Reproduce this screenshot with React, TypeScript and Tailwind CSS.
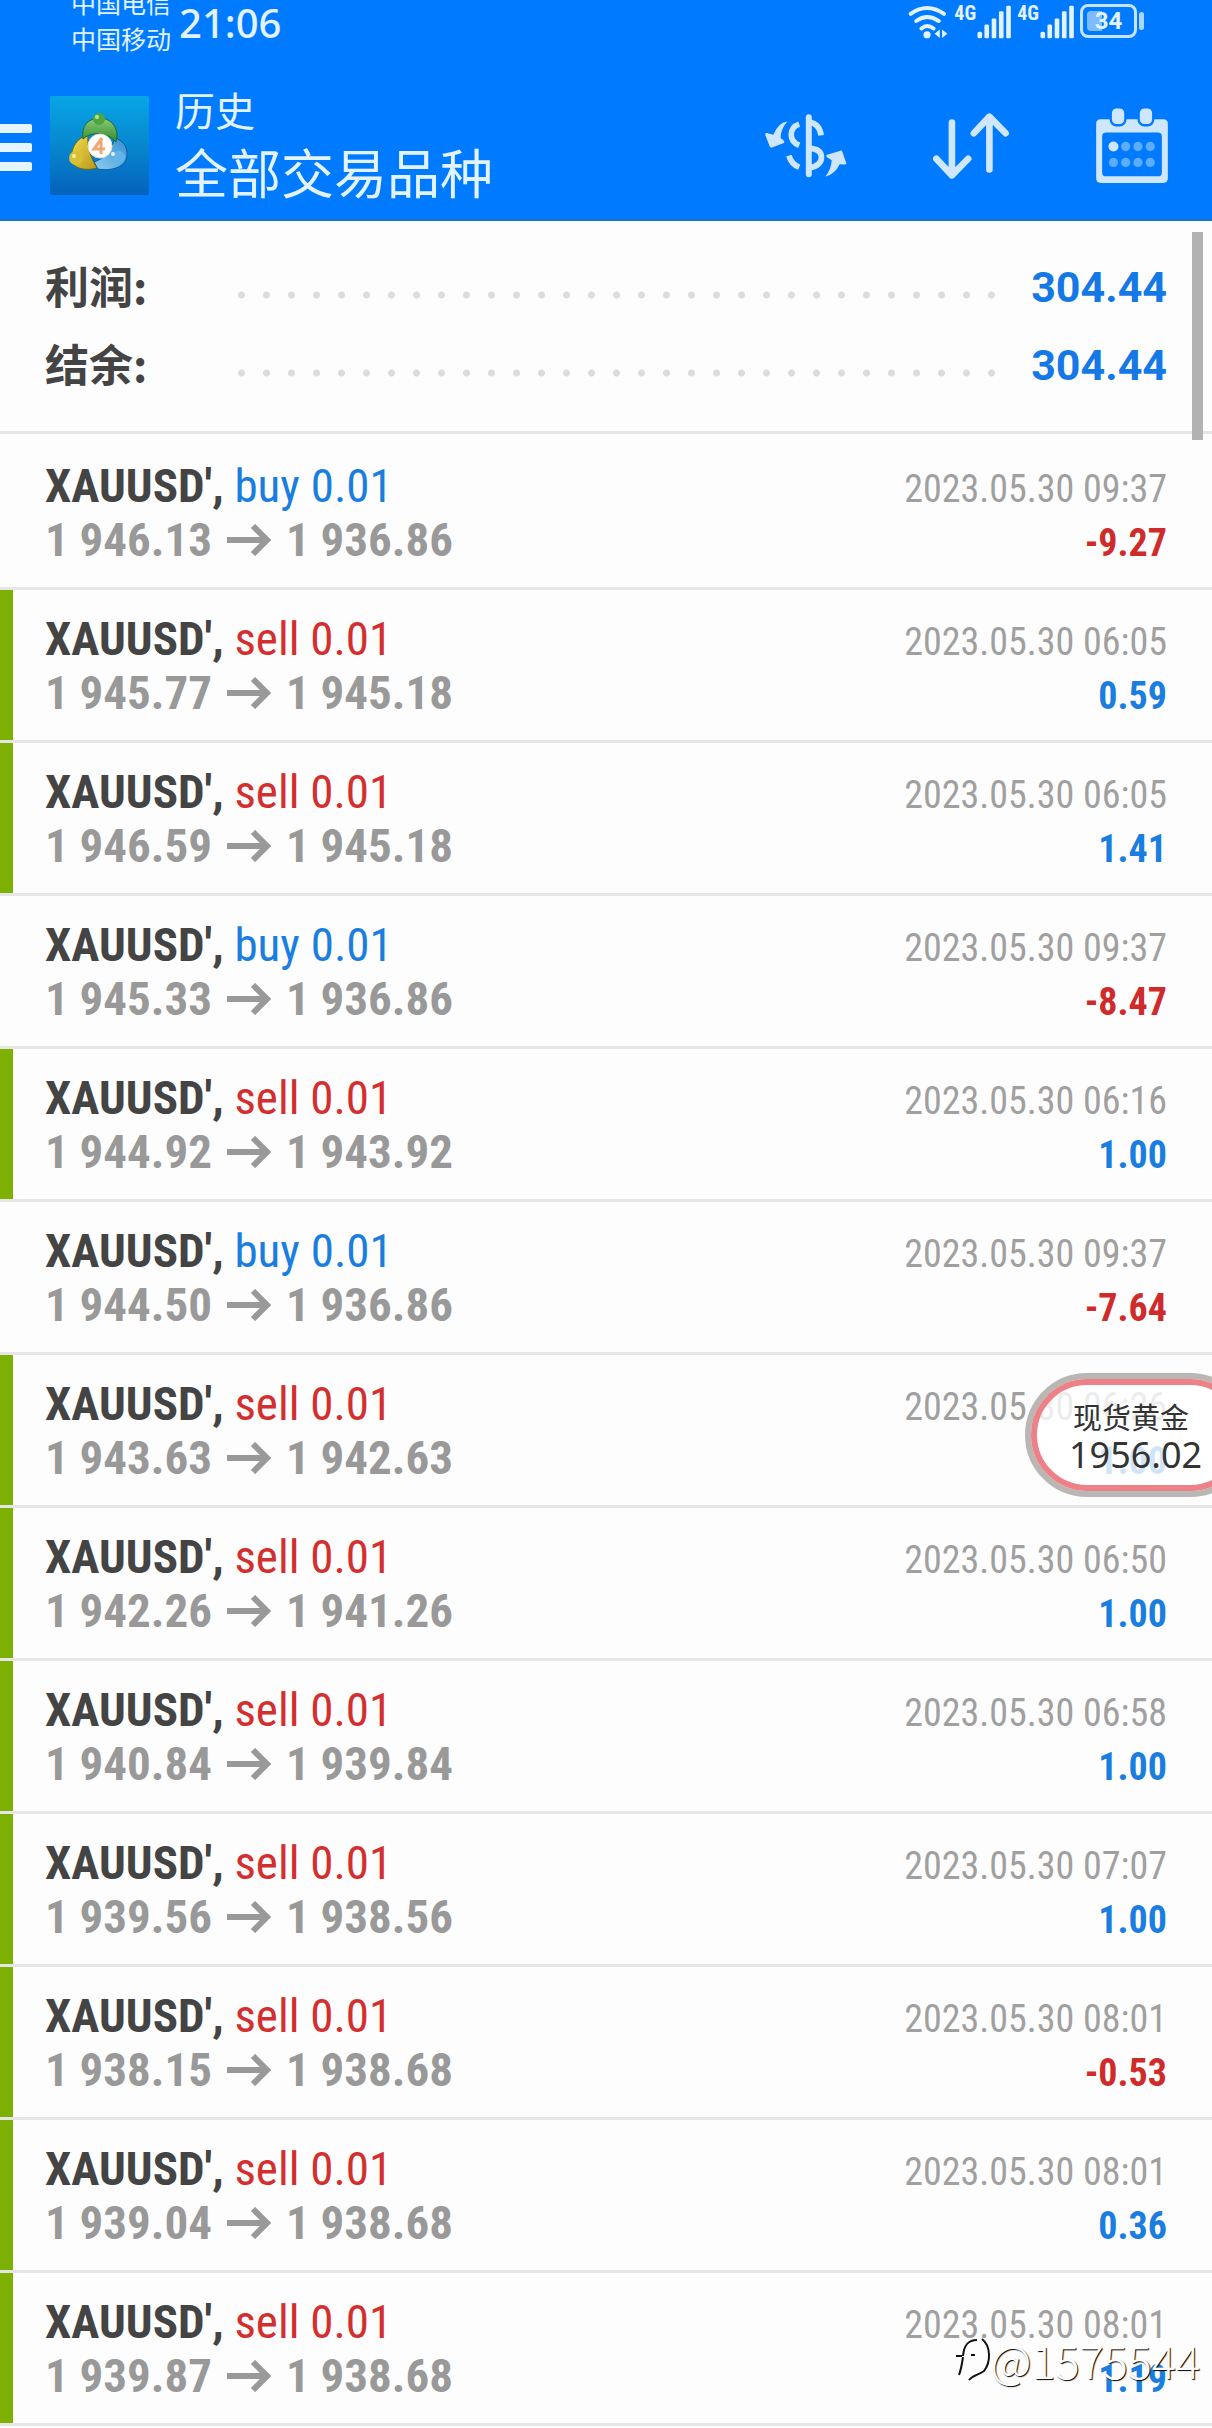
import React from 'react'

type Deal = {
    side: 'buy' | 'sell';
    open: string;
    close: string;
    time: string;
    profit: string;
    marked?: boolean;
}

const deals: Deal[] = [
    { side: 'buy', open: '1 946.13', close: '1 936.86', time: '09:37', profit: '-9.27' },
    { side: 'sell', open: '1 945.77', close: '1 945.18', time: '06:05', profit: '0.59', marked: true },
    { side: 'sell', open: '1 946.59', close: '1 945.18', time: '06:05', profit: '1.41', marked: true },
    { side: 'buy', open: '1 945.33', close: '1 936.86', time: '09:37', profit: '-8.47' },
    { side: 'sell', open: '1 944.92', close: '1 943.92', time: '06:16', profit: '1.00', marked: true },
    { side: 'buy', open: '1 944.50', close: '1 936.86', time: '09:37', profit: '-7.64' },
    { side: 'sell', open: '1 943.63', close: '1 942.63', time: '06:26', profit: '1.00', marked: true },
    { side: 'sell', open: '1 942.26', close: '1 941.26', time: '06:50', profit: '1.00', marked: true },
    { side: 'sell', open: '1 940.84', close: '1 939.84', time: '06:58', profit: '1.00', marked: true },
    { side: 'sell', open: '1 939.56', close: '1 938.56', time: '07:07', profit: '1.00', marked: true },
    { side: 'sell', open: '1 938.15', close: '1 938.68', time: '08:01', profit: '-0.53', marked: true },
    { side: 'sell', open: '1 939.04', close: '1 938.68', time: '08:01', profit: '0.36', marked: true },
    { side: 'sell', open: '1 939.87', close: '1 938.68', time: '08:01', profit: '1.19', marked: true },
]

function WifiIcon() {
    return (
        <svg className="w-[41px] h-9" viewBox="20 8 125 110" fill="none" stroke="currentColor" strokeWidth="12" strokeLinecap="round">
            <path d="M28 38Q78 2 130 38M45 60Q78 36 114 60M61 83Q78 68 98 83" />
            <circle cx="78" cy="102" r="11" fill="currentColor" stroke="none" />
            <path d="M101 99L117 86V112ZM140 99L124 86V112Z" fill="currentColor" stroke="none" />
        </svg>
    )
}

function Signal() {
    return (
        <div className="flex items-start">
            <span className="font-['Roboto_Condensed','Roboto',sans-serif] font-bold text-[20px] leading-[18px]">4G</span>
            <svg className="w-9 h-[35px]" viewBox="214 10 108 106" fill="currentColor">
                <rect x="218" y="94" width="14" height="20" rx="5" />
                <rect x="239" y="72" width="14" height="42" rx="4" />
                <rect x="261" y="54" width="14" height="60" rx="4" />
                <rect x="283" y="32" width="14" height="82" rx="4" />
                <rect x="305" y="15" width="14" height="99" rx="4" />
            </svg>
        </div>
    )
}

function Battery() {
    return (
        <div className="flex items-center gap-[2px] h-[34px]">
            <div className="w-[57px] h-[34px] rounded-lg border-3 border-[#c4e4ff] p-1 flex">
                <span className="w-full rounded-sm bg-linear-to-r from-[#7cbcff] from-34% to-transparent to-34% text-center font-['Roboto',sans-serif] font-bold text-[24px] leading-[20px]">
                    34
                </span>
            </div>
            <div className="w-[5px] h-[18px] rounded-sm bg-[#a9d6ff]" />
        </div>
    )
}

function AppLogo() {
    return (
        <svg className="w-[99px] h-[99px] shrink-0" viewBox="0 0 99 99">
            <defs>
                <linearGradient id="tile" x1="0" y1="0" x2="0" y2="1">
                    <stop offset="0" stopColor="#07a6e6" />
                    <stop offset="0.5" stopColor="#0787cf" />
                    <stop offset="1" stopColor="#0562bc" />
                </linearGradient>
                <linearGradient id="green" x1="0" y1="0" x2="0" y2="1">
                    <stop offset="0" stopColor="#8ccb7a" />
                    <stop offset="1" stopColor="#2f8a2c" />
                </linearGradient>
                <linearGradient id="gold" x1="0" y1="0" x2="1" y2="1">
                    <stop offset="0" stopColor="#f2e04e" />
                    <stop offset="1" stopColor="#b9951a" />
                </linearGradient>
                <linearGradient id="sky" x1="1" y1="0" x2="0" y2="1">
                    <stop offset="0" stopColor="#2f8fd0" />
                    <stop offset="1" stopColor="#8fcdf2" />
                </linearGradient>
            </defs>
            <rect width="99" height="99" rx="2" fill="url(#tile)" />
            <path d="M48 73C58 75 75 73 77 60C78 50 72 44 65 42C60 56 55 62 44 66Z" fill="url(#sky)" stroke="#0b5c9c" />
            <path d="M38 39C27 42 22 50 21 62C20 71 34 76 47 72C41 62 37 52 38 39Z" fill="url(#gold)" stroke="#5f6a1d" />
            <path d="M33 43C31 30 38 22 50 22C62 22 70 34 66 46C60 39 45 33 33 43Z" fill="url(#green)" stroke="#1c6a3a" />
            <circle cx="49" cy="23" r="6" fill="#4fa63e" />
            <circle cx="47" cy="21" r="2" fill="#b6e3a4" />
            <circle cx="26" cy="62" r="7" fill="#d9bf35" />
            <circle cx="24" cy="60" r="2" fill="#fbf3a0" />
            <circle cx="69" cy="61" r="6" fill="#62b4ea" />
            <circle cx="63" cy="58" r="2" fill="#e3f4ff" />
            <circle cx="50" cy="50" r="12" fill="#fff" stroke="#e6dcc8" />
            <path d="M52 42L44 53H55M51 44V58" fill="none" stroke="#f0a873" strokeWidth="3" />
        </svg>
    )
}

function CurrencyIcon() {
    return (
        <svg className="w-[83px] h-[65px]" viewBox="30 35 250 195" fill="none" stroke="currentColor" strokeWidth="17" strokeLinecap="butt">
            <path d="M100 60Q72 64 58 100L38 95Q32 94 34 101L47 135Q50 142 56 138L88 126Q94 123 90 118L80 110Q80 84 100 60Z" fill="currentColor" stroke="none" />
            <path d="M215 226Q243 220 258 189L273 190Q280 189 277 183L266 151Q263 146 258 149L220 160Q215 163 219 167L234 177Q232 205 215 226Z" fill="currentColor" stroke="none" />
            <path d="M136 68Q112 76 112 100Q112 122 136 132M105 163Q112 188 136 198M166 62Q198 68 202 102M166 141Q203 142 203 168Q203 194 166 200" />
            <path d="M165 47V219" strokeWidth="18" strokeLinecap="round" />
        </svg>
    )
}

function SortIcon() {
    return (
        <svg className="w-[78px] h-[68px]" viewBox="630 335 235 205" fill="none" stroke="currentColor" strokeWidth="20" strokeLinecap="round" strokeLinejoin="round">
            <path d="M690 367V524M643 476L690 526L739 476" />
            <path d="M803 508V350M756 399L803 349L852 399" />
        </svg>
    )
}

function CalendarIcon() {
    return (
        <svg className="w-[74px] h-[77px]" viewBox="1124 318 222 232" fill="currentColor">
            <path fillRule="evenodd" d="M1141 355H1329Q1343 355 1343 369V533Q1343 547 1329 547H1141Q1127 547 1127 533V369Q1127 355 1141 355ZM1157 395Q1145 395 1145 407V515Q1145 527 1157 527H1313Q1325 527 1325 515V407Q1325 395 1313 395Z" />
            <rect x="1171" y="319" width="44" height="54" rx="17" stroke="#007bff" strokeWidth="7" />
            <rect x="1255" y="319" width="44" height="54" rx="17" stroke="#007bff" strokeWidth="7" />
            <circle cx="1179" cy="437" r="15" />
            <g fill="#5cadff">
                <circle cx="1216" cy="437" r="14" />
                <circle cx="1253" cy="437" r="14" />
                <circle cx="1290" cy="437" r="14" />
                <circle cx="1179" cy="485" r="14" />
                <circle cx="1216" cy="485" r="14" />
                <circle cx="1253" cy="485" r="14" />
                <circle cx="1290" cy="485" r="14" />
            </g>
        </svg>
    )
}

function Header() {
    return (
        <header className="bg-[#007bff] border-b-2 border-[#1a6fcf] text-[#e2f3ff] font-['Noto_Sans_CJK_SC',sans-serif]">
            <div className="flex justify-between h-14 overflow-hidden pl-[71px] pr-[68px]">
                <div className="flex gap-2">
                    <div className="-mt-4 text-[25px] leading-9">
                        <p>中国电信</p>
                        <p>中国移动</p>
                    </div>
                    <p className="font-['Noto_Sans',sans-serif] font-medium text-[40px] leading-[46px]">21:06</p>
                </div>
                <div className="flex items-start gap-[5px] pt-1">
                    <WifiIcon />
                    <Signal />
                    <Signal />
                    <Battery />
                </div>
            </div>
            <div className="flex items-center h-[163px] pt-4 pr-[43px]">
                <button aria-label="菜单" className="flex flex-col gap-2.5 w-8 pt-1">
                    <span className="h-[9px] rounded-r-xs bg-[#e6f5ff]" />
                    <span className="h-[9px] rounded-r-xs bg-[#e6f5ff]" />
                    <span className="h-[9px] rounded-r-xs bg-[#e6f5ff]" />
                </button>
                <div className="ml-[18px]">
                    <AppLogo />
                </div>
                <div className="ml-[26px] pb-3">
                    <p className="text-[40px] leading-[62px]">历史</p>
                    <h1 className="text-[53px] leading-[62px]">全部交易品种</h1>
                </div>
                <div className="ml-auto flex items-center gap-[85px] text-[#cfe6ff]">
                    <button aria-label="货币"><CurrencyIcon /></button>
                    <button aria-label="排序"><SortIcon /></button>
                    <button aria-label="日期"><CalendarIcon /></button>
                </div>
            </div>
        </header>
    )
}

function SummaryRow({ label, value }: { label: string; value: string }) {
    return (
        <div className="flex items-center h-[78px]">
            <dt className="w-[184px] pb-1 font-['Noto_Sans_CJK_SC',sans-serif] font-bold text-[44px] text-[#444]">{label}</dt>
            <div className="flex-1 h-2 mt-4 mr-6 bg-[radial-gradient(circle,#dcdcdc_3px,transparent_4px)] bg-[length:25px_8px] bg-repeat-x" />
            <dd className="font-['Roboto',sans-serif] font-bold text-[43px] text-[#1479e6]">{value}</dd>
        </div>
    )
}

function DealRow({ deal }: { deal: Deal }) {
    return (
        <li
            className={`relative px-[45px] pt-[22px] pb-5 first:pt-[25px] border-b-3 border-[#e6e6e6] leading-[54px] ${
                deal.marked ? "before:absolute before:inset-y-0 before:left-0 before:w-[13px] before:bg-[#7cb002]" : ""
            }`}
        >
            <div className="flex justify-between items-baseline h-[54px]">
                <p className="text-[47px]">
                    <span className="font-bold text-[#444]">XAUUSD',</span>{' '}
                    <span className={deal.side === 'buy' ? "text-[#1a7ee0]" : "text-[#d32f2f]"}>{deal.side} 0.01</span>
                </p>
                <time className="text-[38px] text-[#a0a0a0]">2023.05.30 {deal.time}</time>
            </div>
            <div className="flex justify-between items-baseline h-[54px] font-bold">
                <p className="text-[47px] text-[#999]">
                    {deal.open}
                    <svg className="inline w-11 h-8 mx-[15px] -mt-2" viewBox="0 0 44 32" fill="none" stroke="currentColor" strokeWidth="6">
                        <path d="M0 16H40M26 2L40 16L26 30" />
                    </svg>
                    {deal.close}
                </p>
                <p className={`text-[38px] ${deal.profit.startsWith('-') ? "text-[#cf2b2b]" : "text-[#1a7ee0]"}`}>{deal.profit}</p>
            </div>
        </li>
    )
}

export default function App() {
    return (
        <div className="relative min-h-screen overflow-hidden bg-[#fdfdfd] font-['Roboto_Condensed','Roboto',sans-serif]">
            <Header />
            <main className="relative">
                <dl className="py-[27px] px-[45px] border-b-3 border-[#e6e6e6]">
                    <SummaryRow label="利润:" value="304.44" />
                    <SummaryRow label="结余:" value="304.44" />
                </dl>
                <ul>
                    {deals.map((deal, i) => (
                        <DealRow key={i} deal={deal} />
                    ))}
                </ul>
                {/* scroll thumb */}
                <div className="absolute top-[11px] right-[9px] w-[11px] h-[208px] bg-[#b2b2b2]" />
            </main>

            {/* floating quote */}
            <div className="absolute top-[1373px] -right-10 w-[227px] h-[124px] rounded-[62px] border-6 border-[#b9b6b4]">
                <div className="h-full rounded-[56px] border-6 border-[#ec8287] bg-white/80 pl-8 pt-3 text-[#333]">
                    <p className="pl-1 font-['Noto_Sans_CJK_SC',sans-serif] text-[29px] leading-[38px]">现货黄金</p>
                    <p className="font-['Noto_Sans',sans-serif] text-[36px] leading-[40px]">1956.02</p>
                </div>
            </div>

            <div className="absolute bottom-10 right-3 flex items-center">
                <svg className="w-9 h-11" viewBox="0 0 36 44" fill="none" stroke="#111" strokeWidth="2">
                    <path d="M22 2C13 2 9 7 8 18M1 18H7M8 19C7 26 6 32 4 37M16 17H20" />
                    <path d="M27 1C36 8 36 24 29 33C24 37 18 37 14 42" strokeWidth="2" />
                </svg>
                <span className="font-['Noto_Sans_CJK_SC',sans-serif] font-light text-[45px] leading-[56px] text-white [text-shadow:1px_1px_1px_#000]">
                    @1575544
                </span>
            </div>
        </div>
    )
}
